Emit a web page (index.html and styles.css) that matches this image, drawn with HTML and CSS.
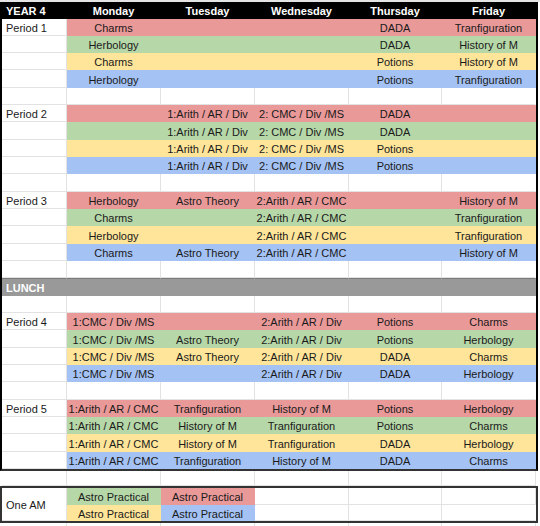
FILE: index.html
```html
<!DOCTYPE html>
<html>
<head>
<meta charset="utf-8">
<link rel="stylesheet" href="styles.css">
</head>
<body>
<div class="sheet">
  <div class="grid main">
    <div class="c hd lbl">YEAR 4</div><div class="c hd">Monday</div><div class="c hd">Tuesday</div><div class="c hd">Wednesday</div><div class="c hd">Thursday</div><div class="c hd">Friday</div>

    <div class="c lbl">Period 1</div><div class="c r">Charms</div><div class="c r"></div><div class="c r"></div><div class="c r">DADA</div><div class="c r">Tranfiguration</div>
    <div class="c"></div><div class="c g">Herbology</div><div class="c g"></div><div class="c g"></div><div class="c g">DADA</div><div class="c g">History of M</div>
    <div class="c"></div><div class="c y">Charms</div><div class="c y"></div><div class="c y"></div><div class="c y">Potions</div><div class="c y">History of M</div>
    <div class="c"></div><div class="c b">Herbology</div><div class="c b"></div><div class="c b"></div><div class="c b">Potions</div><div class="c b">Tranfiguration</div>
    <div class="c"></div><div class="c"></div><div class="c"></div><div class="c"></div><div class="c"></div><div class="c"></div>

    <div class="c lbl">Period 2</div><div class="c r"></div><div class="c r">1:Arith / AR / Div</div><div class="c r">2: CMC / Div /MS</div><div class="c r">DADA</div><div class="c r"></div>
    <div class="c"></div><div class="c g"></div><div class="c g">1:Arith / AR / Div</div><div class="c g">2: CMC / Div /MS</div><div class="c g">DADA</div><div class="c g"></div>
    <div class="c"></div><div class="c y"></div><div class="c y">1:Arith / AR / Div</div><div class="c y">2: CMC / Div /MS</div><div class="c y">Potions</div><div class="c y"></div>
    <div class="c"></div><div class="c b"></div><div class="c b">1:Arith / AR / Div</div><div class="c b">2: CMC / Div /MS</div><div class="c b">Potions</div><div class="c b"></div>
    <div class="c"></div><div class="c"></div><div class="c"></div><div class="c"></div><div class="c"></div><div class="c"></div>

    <div class="c lbl">Period 3</div><div class="c r">Herbology</div><div class="c r">Astro Theory</div><div class="c r">2:Arith / AR / CMC</div><div class="c r"></div><div class="c r">History of M</div>
    <div class="c"></div><div class="c g">Charms</div><div class="c g"></div><div class="c g">2:Arith / AR / CMC</div><div class="c g"></div><div class="c g">Tranfiguration</div>
    <div class="c"></div><div class="c y">Herbology</div><div class="c y"></div><div class="c y">2:Arith / AR / CMC</div><div class="c y"></div><div class="c y">Tranfiguration</div>
    <div class="c"></div><div class="c b">Charms</div><div class="c b">Astro Theory</div><div class="c b">2:Arith / AR / CMC</div><div class="c b"></div><div class="c b">History of M</div>
    <div class="c"></div><div class="c"></div><div class="c"></div><div class="c"></div><div class="c"></div><div class="c"></div>

    <div class="c lu lbl">LUNCH</div><div class="c lu"></div><div class="c lu"></div><div class="c lu"></div><div class="c lu"></div><div class="c lu"></div>
    <div class="c"></div><div class="c"></div><div class="c"></div><div class="c"></div><div class="c"></div><div class="c"></div>

    <div class="c lbl">Period 4</div><div class="c r">1:CMC / Div /MS</div><div class="c r"></div><div class="c r">2:Arith / AR / Div</div><div class="c r">Potions</div><div class="c r">Charms</div>
    <div class="c"></div><div class="c g">1:CMC / Div /MS</div><div class="c g">Astro Theory</div><div class="c g">2:Arith / AR / Div</div><div class="c g">Potions</div><div class="c g">Herbology</div>
    <div class="c"></div><div class="c y">1:CMC / Div /MS</div><div class="c y">Astro Theory</div><div class="c y">2:Arith / AR / Div</div><div class="c y">DADA</div><div class="c y">Charms</div>
    <div class="c"></div><div class="c b">1:CMC / Div /MS</div><div class="c b"></div><div class="c b">2:Arith / AR / Div</div><div class="c b">DADA</div><div class="c b">Herbology</div>
    <div class="c"></div><div class="c"></div><div class="c"></div><div class="c"></div><div class="c"></div><div class="c"></div>

    <div class="c lbl">Period 5</div><div class="c r">1:Arith / AR / CMC</div><div class="c r">Tranfiguration</div><div class="c r">History of M</div><div class="c r">Potions</div><div class="c r">Herbology</div>
    <div class="c"></div><div class="c g">1:Arith / AR / CMC</div><div class="c g">History of M</div><div class="c g">Tranfiguration</div><div class="c g">Potions</div><div class="c g">Charms</div>
    <div class="c"></div><div class="c y">1:Arith / AR / CMC</div><div class="c y">History of M</div><div class="c y">Tranfiguration</div><div class="c y">DADA</div><div class="c y">Herbology</div>
    <div class="c"></div><div class="c b">1:Arith / AR / CMC</div><div class="c b">Tranfiguration</div><div class="c b">History of M</div><div class="c b">DADA</div><div class="c b">Charms</div>
  </div>

  <div class="grid gap">
    <div class="c"></div><div class="c"></div><div class="c"></div><div class="c"></div><div class="c"></div><div class="c"></div>
  </div>

  <div class="grid am">
    <div class="c lbl span2">One AM</div><div class="c g">Astro Practical</div><div class="c r">Astro Practical</div><div class="c"></div><div class="c"></div><div class="c"></div>
    <div class="c y">Astro Practical</div><div class="c b">Astro Practical</div><div class="c"></div><div class="c"></div><div class="c"></div>
  </div>

  <div class="grid tail">
    <div class="c"></div><div class="c"></div><div class="c"></div><div class="c"></div><div class="c"></div><div class="c"></div>
  </div>
</div>
</body>
</html>
```
FILE: styles.css
```css
html, body {
  margin: 0;
  padding: 0;
  background: #fff;
}
body {
  font-family: "Liberation Sans", Arial, sans-serif;
  font-size: 11px;
  color: #1a1a1a;
  overflow: hidden;
}
.sheet {
  width: 540px;
  border-top: 2px solid #e4e4e4;
}
.grid {
  display: grid;
  grid-template-columns: 65px 94px 94px 94px 93px 94px;
  width: 534px;
}
.main {
  border-left: 2px solid #000;
  border-right: 2px solid #000;
  border-bottom: 2px solid #333;
  grid-template-rows: 16.5px;
  grid-auto-rows: 17.33px;
}
.gap {
  margin-left: 2px;
  grid-auto-rows: 15.3px;
}
.am {
  border: 2px solid #333;
  grid-template-rows: 17px 16px;
}
.tail {
  margin-left: 2px;
  grid-auto-rows: 17px;
}
.c {
  box-sizing: border-box;
  border-right: 1px solid #e2e2e2;
  border-bottom: 1px solid #e2e2e2;
  display: flex;
  align-items: center;
  justify-content: center;
  white-space: nowrap;
  overflow: hidden;
  line-height: 1;
  padding-top: 3px;
}
.lbl {
  justify-content: flex-start;
  padding-left: 4px;
}
.span2 {
  grid-row: span 2;
}
.hd {
  background: #000;
  border-color: #000;
  color: #fff;
  font-weight: bold;
}
.r { background: #ea9999; border-color: #ea9999; }
.g { background: #b6d7a8; border-color: #b6d7a8; }
.y { background: #ffe599; border-color: #ffe599; }
.b { background: #a4c2f4; border-color: #a4c2f4; }
.lu {
  background: #999;
  border-color: #999;
  color: #fff;
  font-weight: bold;
  box-shadow: inset 0 1px 0 #7a7a7a;
}
.am .c:last-child,
.main .c:nth-child(6n) {
  border-right-color: transparent;
}
```
